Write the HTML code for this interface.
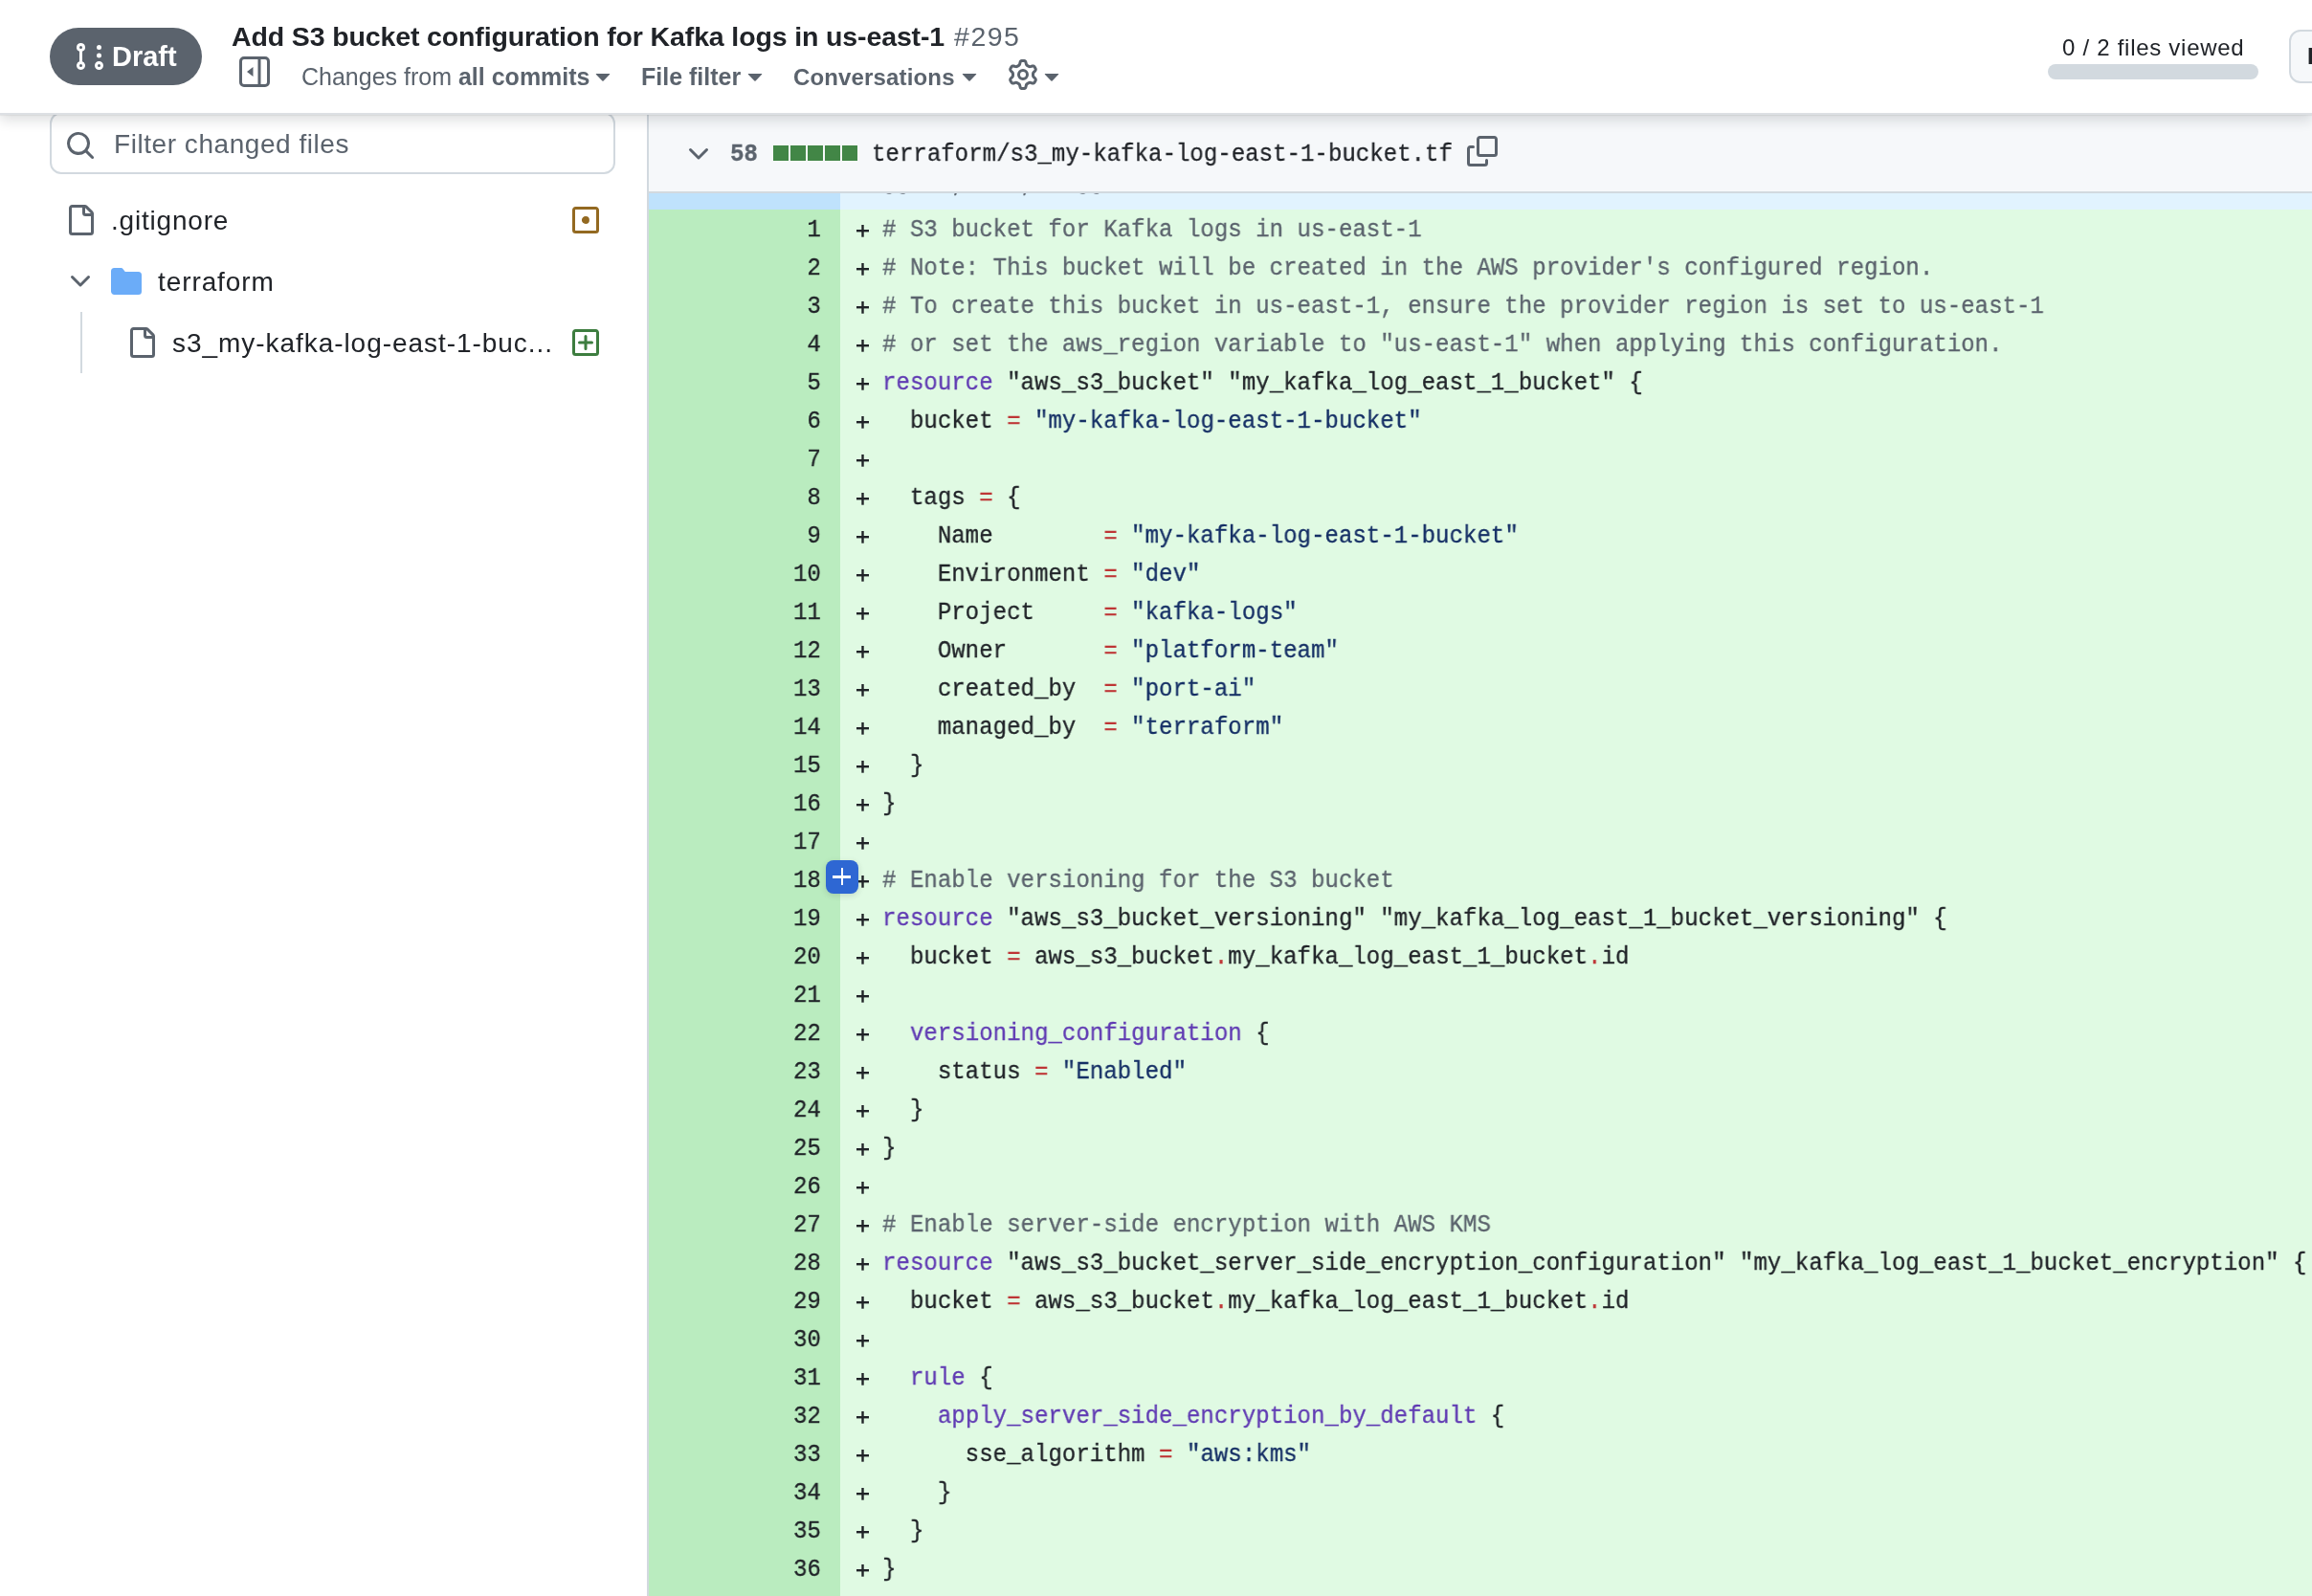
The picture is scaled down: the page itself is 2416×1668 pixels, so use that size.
<!DOCTYPE html>
<html><head><meta charset="utf-8"><title>Files changed</title><style>
*{box-sizing:border-box}
html,body{margin:0;padding:0}
body{width:2416px;height:1668px;overflow:hidden;position:relative;background:#fff;font-family:"Liberation Sans",sans-serif;color:#202328}
.ic{position:absolute;display:block}
.abs{position:absolute;white-space:pre}
.t{position:absolute;white-space:pre;line-height:40px;will-change:transform}
i{font-style:normal}
.c{color:#5b636d} .k{color:#603bb3} .s{color:#152f65} .o{color:#be3536}
.mono{font-family:"Liberation Mono",monospace}
</style></head>
<body>
<div class=abs style="left:52px;top:117px;width:591px;height:65px;border:2px solid #d2d9df;border-radius:12px;background:#fff"></div>
<svg class=ic style="left:68px;top:136px;width:32px;height:32px;fill:#5b636d;" viewBox="0 0 16 16"><path d="M10.68 11.74a6 6 0 0 1-7.922-8.982 6 6 0 0 1 8.982 7.922l3.04 3.04a.749.749 0 0 1-.326 1.275.749.749 0 0 1-.734-.215ZM11.5 7a4.499 4.499 0 1 0-8.997 0A4.499 4.499 0 0 0 11.5 7Z"/></svg>
<div class=t style="left:119px;top:131px;font-size:28px;font-weight:normal;letter-spacing:0.55px;color:#5b636d;">Filter changed files</div>
<svg class=ic style="left:68px;top:214px;width:32px;height:32px;fill:#5b636d;" viewBox="0 0 16 16"><path d="M2 1.75C2 .784 2.784 0 3.75 0h6.586c.464 0 .909.184 1.237.513l2.914 2.914c.329.328.513.773.513 1.237v9.586A1.75 1.75 0 0 1 13.25 16h-9.5A1.75 1.75 0 0 1 2 14.25Zm1.75-.25a.25.25 0 0 0-.25.25v12.5c0 .138.112.25.25.25h9.5a.25.25 0 0 0 .25-.25V6h-2.75A1.75 1.75 0 0 1 9 4.25V1.5Zm6.75.062V4.25c0 .138.112.25.25.25h2.688l-.011-.013-2.914-2.914-.013-.011Z"/></svg>
<div class=t style="left:116px;top:211px;font-size:28px;font-weight:normal;letter-spacing:0.8px;color:#202328;">.gitignore</div>
<svg class=ic style="left:596px;top:214px;width:32px;height:32px;fill:#936921;" viewBox="0 0 16 16"><path d="M13.25 1c.966 0 1.75.784 1.75 1.75v10.5A1.75 1.75 0 0 1 13.25 15H2.75A1.75 1.75 0 0 1 1 13.25V2.75C1 1.784 1.784 1 2.75 1ZM2.75 2.5a.25.25 0 0 0-.25.25v10.5c0 .138.112.25.25.25h10.5a.25.25 0 0 0 .25-.25V2.75a.25.25 0 0 0-.25-.25ZM8 10a2 2 0 1 1-.001-3.999A2 2 0 0 1 8 10Z"/></svg>
<svg class=ic style="left:68px;top:278px;width:32px;height:32px;fill:#5b636d;" viewBox="0 0 16 16"><path d="M12.78 5.22a.749.749 0 0 1 0 1.06l-4.25 4.25a.749.749 0 0 1-1.06 0L3.22 6.28a.749.749 0 1 1 1.06-1.06L8 8.939l3.72-3.719a.749.749 0 0 1 1.06 0Z"/></svg>
<svg class=ic style="left:116px;top:278px;width:32px;height:32px;fill:#6bacf8;" viewBox="0 0 16 16"><path d="M1.75 1A1.75 1.75 0 0 0 0 2.75v10.5C0 14.216.784 15 1.75 15h12.5A1.75 1.75 0 0 0 16 13.25v-8.5A1.75 1.75 0 0 0 14.25 3H7.5a.25.25 0 0 1-.2-.1l-.9-1.2C6.07 1.26 5.55 1 5 1H1.75Z"/></svg>
<div class=t style="left:164.5px;top:275px;font-size:28px;font-weight:normal;letter-spacing:0.91px;color:#202328;">terraform</div>
<div class=abs style="left:84px;top:326px;width:2px;height:64px;background:#d2d9df"></div>
<svg class=ic style="left:132px;top:342px;width:32px;height:32px;fill:#5b636d;" viewBox="0 0 16 16"><path d="M2 1.75C2 .784 2.784 0 3.75 0h6.586c.464 0 .909.184 1.237.513l2.914 2.914c.329.328.513.773.513 1.237v9.586A1.75 1.75 0 0 1 13.25 16h-9.5A1.75 1.75 0 0 1 2 14.25Zm1.75-.25a.25.25 0 0 0-.25.25v12.5c0 .138.112.25.25.25h9.5a.25.25 0 0 0 .25-.25V6h-2.75A1.75 1.75 0 0 1 9 4.25V1.5Zm6.75.062V4.25c0 .138.112.25.25.25h2.688l-.011-.013-2.914-2.914-.013-.011Z"/></svg>
<div class=t style="left:180px;top:339px;font-size:28px;font-weight:normal;letter-spacing:0.95px;color:#202328;">s3_my-kafka-log-east-1-buc...</div>
<svg class=ic style="left:596px;top:342px;width:32px;height:32px;fill:#3d7d3f;" viewBox="0 0 16 16"><path d="M2.75 1h10.5c.966 0 1.75.784 1.75 1.75v10.5A1.75 1.75 0 0 1 13.25 15H2.75A1.75 1.75 0 0 1 1 13.25V2.75C1 1.784 1.784 1 2.75 1Zm10.5 1.5H2.75a.25.25 0 0 0-.25.25v10.5c0 .138.112.25.25.25h10.5a.25.25 0 0 0 .25-.25V2.75a.25.25 0 0 0-.25-.25ZM8 4a.75.75 0 0 1 .75.75v2.5h2.5a.75.75 0 0 1 0 1.5h-2.5v2.5a.75.75 0 0 1-1.5 0v-2.5h-2.5a.75.75 0 0 1 0-1.5h2.5v-2.5A.75.75 0 0 1 8 4Z"/></svg>
<div class=abs style="left:676px;top:118px;width:2px;height:1550px;background:#d2d9df"></div>
<div class=abs style="left:678px;top:202px;width:200px;height:17px;background:#bfe2fc"></div>
<div class=abs style="left:878px;top:202px;width:1538px;height:17px;background:#e1f3fe"></div>
<pre class="abs mono" style="margin:0;left:922px;top:172px;font-size:26px;line-height:40px;color:#5b636d;transform:scaleX(0.9262);transform-origin:0 0;will-change:transform;-webkit-text-stroke:0.3px currentColor">@@ -0,0 +1,58 @@</pre>
<div class=abs style="left:678px;top:219px;width:200px;height:1449px;background:#baecbf"></div>
<div class=abs style="left:878px;top:219px;width:1538px;height:1449px;background:#e0fae3"></div>
<pre class="abs mono" style="margin:0;left:642.06px;top:220px;width:215.94px;text-align:right;font-size:26px;line-height:40px;color:#202328;transform:scaleX(0.9262);transform-origin:100% 0;will-change:transform;-webkit-text-stroke:0.3px currentColor">1
2
3
4
5
6
7
8
9
10
11
12
13
14
15
16
17
18
19
20
21
22
23
24
25
26
27
28
29
30
31
32
33
34
35
36
37</pre>
<pre class="abs mono" style="margin:0;left:922px;top:220px;font-size:26px;line-height:40px;color:#202328;transform:scaleX(0.9262);transform-origin:0 0;will-change:transform;-webkit-text-stroke:0.3px currentColor"><i class=c># S3 bucket for Kafka logs in us-east-1</i>
<i class=c># Note: This bucket will be created in the AWS provider's configured region.</i>
<i class=c># To create this bucket in us-east-1, ensure the provider region is set to us-east-1</i>
<i class=c># or set the aws_region variable to "us-east-1" when applying this configuration.</i>
<i class=k>resource</i> "aws_s3_bucket" "my_kafka_log_east_1_bucket" {
  bucket <i class=o>=</i> <i class=s>"my-kafka-log-east-1-bucket"</i>

  tags <i class=o>=</i> {
    Name        <i class=o>=</i> <i class=s>"my-kafka-log-east-1-bucket"</i>
    Environment <i class=o>=</i> <i class=s>"dev"</i>
    Project     <i class=o>=</i> <i class=s>"kafka-logs"</i>
    Owner       <i class=o>=</i> <i class=s>"platform-team"</i>
    created_by  <i class=o>=</i> <i class=s>"port-ai"</i>
    managed_by  <i class=o>=</i> <i class=s>"terraform"</i>
  }
}

<i class=c># Enable versioning for the S3 bucket</i>
<i class=k>resource</i> "aws_s3_bucket_versioning" "my_kafka_log_east_1_bucket_versioning" {
  bucket <i class=o>=</i> aws_s3_bucket<i class=o>.</i>my_kafka_log_east_1_bucket<i class=o>.</i>id

  <i class=k>versioning_configuration</i> {
    status <i class=o>=</i> <i class=s>"Enabled"</i>
  }
}

<i class=c># Enable server-side encryption with AWS KMS</i>
<i class=k>resource</i> "aws_s3_bucket_server_side_encryption_configuration" "my_kafka_log_east_1_bucket_encryption" {
  bucket <i class=o>=</i> aws_s3_bucket<i class=o>.</i>my_kafka_log_east_1_bucket<i class=o>.</i>id

  <i class=k>rule</i> {
    <i class=k>apply_server_side_encryption_by_default</i> {
      sse_algorithm <i class=o>=</i> <i class=s>"aws:kms"</i>
    }
  }
}
</pre>
<svg class=ic style="left:894px;top:219px;width:16px;height:1449px" viewBox="0 0 16 1449"><defs><pattern id="pl" width="16" height="40" patternUnits="userSpaceOnUse"><rect x="1" y="21" width="13" height="2.4" fill="#202328"/><rect x="6.3" y="16" width="2.4" height="12.7" fill="#202328"/></pattern></defs><rect width="16" height="1449" fill="url(#pl)"/></svg>
<div class=abs style="left:863px;top:899px;width:34px;height:35px;border-radius:8px;background:#2e67d3;box-shadow:0 2px 6px rgba(31,35,40,0.15)"></div>
<div class=abs style="left:870px;top:915px;width:19px;height:2.5px;background:#fff"></div>
<div class=abs style="left:878.5px;top:907px;width:2.5px;height:18px;background:#fff"></div>
<div class=abs style="left:678px;top:120px;width:1738px;height:82px;background:#f6f8fa;border-bottom:2px solid #d2d9df"></div>
<svg class=ic style="left:714px;top:145px;width:32px;height:32px;fill:#5b636d;" viewBox="0 0 16 16"><path d="M12.78 5.22a.749.749 0 0 1 0 1.06l-4.25 4.25a.749.749 0 0 1-1.06 0L3.22 6.28a.749.749 0 1 1 1.06-1.06L8 8.939l3.72-3.719a.749.749 0 0 1 1.06 0Z"/></svg>
<pre class="abs mono" style="margin:0;left:763px;top:141px;font-size:26px;line-height:40px;font-weight:bold;color:#5b636d;transform:scaleX(0.9262);transform-origin:0 0;will-change:transform;-webkit-text-stroke:0.3px currentColor">58</pre>
<div class=abs style="left:808px;top:152px;width:16px;height:16px;background:#428646"></div>
<div class=abs style="left:826px;top:152px;width:16px;height:16px;background:#428646"></div>
<div class=abs style="left:844px;top:152px;width:16px;height:16px;background:#428646"></div>
<div class=abs style="left:862px;top:152px;width:16px;height:16px;background:#428646"></div>
<div class=abs style="left:880px;top:152px;width:16px;height:16px;background:#428646"></div>
<pre class="abs mono" style="margin:0;left:910.5px;top:141px;font-size:26px;line-height:40px;color:#202328;transform:scaleX(0.9262);transform-origin:0 0;will-change:transform;-webkit-text-stroke:0.3px currentColor">terraform/s3_my-kafka-log-east-1-bucket.tf</pre>
<svg class=ic style="left:1533px;top:142px;width:32px;height:32px;fill:#5b636d;" viewBox="0 0 16 16"><path d="M0 6.75C0 5.784.784 5 1.75 5h1.5a.75.75 0 0 1 0 1.5h-1.5a.25.25 0 0 0-.25.25v7.5c0 .138.112.25.25.25h7.5a.25.25 0 0 0 .25-.25v-1.5a.75.75 0 0 1 1.5 0v1.5A1.75 1.75 0 0 1 9.25 16h-7.5A1.75 1.75 0 0 1 0 14.25Z"/><path d="M5 1.75C5 .784 5.784 0 6.75 0h7.5C15.216 0 16 .784 16 1.75v7.5A1.75 1.75 0 0 1 14.25 11h-7.5A1.75 1.75 0 0 1 5 9.25Zm1.75-.25a.25.25 0 0 0-.25.25v7.5c0 .138.112.25.25.25h7.5a.25.25 0 0 0 .25-.25v-7.5a.25.25 0 0 0-.25-.25Z"/></svg>
<div class=abs style="left:0;top:0;width:2416px;height:120px;background:#fff;border-bottom:2px solid #dde0e4;box-shadow:0 1px 1px rgba(31,35,40,0.06),0 6px 12px rgba(31,35,40,0.14)"></div>
<div class=abs style="left:52px;top:29px;width:159px;height:60px;border-radius:30px;background:#5b636d"></div>
<svg class=ic style="left:78px;top:43px;width:32px;height:32px;fill:#fff;" viewBox="0 0 16 16"><path d="M3.25 1A2.25 2.25 0 0 1 4 5.372v5.256a2.251 2.251 0 1 1-1.5 0V5.372A2.25 2.25 0 0 1 3.25 1Zm9.5 14a2.25 2.25 0 1 1 0-4.5 2.25 2.25 0 0 1 0 4.5ZM2.5 3.25a.75.75 0 1 0 1.5 0 .75.75 0 0 0-1.5 0ZM3.25 12a.75.75 0 1 0 0 1.5.75.75 0 0 0 0-1.5Zm9.5 0a.75.75 0 1 0 0 1.5.75.75 0 0 0 0-1.5ZM14 7.5a1.25 1.25 0 1 1-2.5 0 1.25 1.25 0 0 1 2.5 0Zm0-4.25a1.25 1.25 0 1 1-2.5 0 1.25 1.25 0 0 1 2.5 0Z"/></svg>
<div class=t style="left:117px;top:39px;font-size:29px;font-weight:bold;letter-spacing:0px;color:#fff;">Draft</div>
<div class=t style="left:242px;top:18px;font-size:28.5px;font-weight:bold;letter-spacing:-0.13px;color:#202328;">Add S3 bucket configuration for Kafka logs in us-east-1<span style="font-weight:normal;color:#5b636d;margin-left:10px;letter-spacing:1.5px">#295</span></div>
<svg class=ic style="left:250px;top:59px;width:32px;height:32px" viewBox="0 0 32 32"><rect x="1.5" y="1.5" width="29" height="29" rx="3.5" fill="none" stroke="#5b636d" stroke-width="3"/><rect x="19.5" y="2" width="3" height="28" fill="#5b636d"/><path d="M14.5 11 L8 16 L14.5 21 Z" fill="#5b636d"/></svg>
<div class=t style="left:314.5px;top:60px;font-size:25px;font-weight:normal;letter-spacing:0px;color:#5b636d;">Changes from <b>all commits</b></div>
<svg class=ic style="left:614px;top:63px;width:32px;height:32px;fill:#5b636d;" viewBox="0 0 16 16"><path d="m4.427 7.427 3.396 3.396a.25.25 0 0 0 .354 0l3.396-3.396A.25.25 0 0 0 11.396 7H4.604a.25.25 0 0 0-.177.427Z"/></svg>
<div class=t style="left:670px;top:60px;font-size:25px;font-weight:bold;letter-spacing:0px;color:#5b636d;">File filter</div>
<svg class=ic style="left:773px;top:63px;width:32px;height:32px;fill:#5b636d;" viewBox="0 0 16 16"><path d="m4.427 7.427 3.396 3.396a.25.25 0 0 0 .354 0l3.396-3.396A.25.25 0 0 0 11.396 7H4.604a.25.25 0 0 0-.177.427Z"/></svg>
<div class=t style="left:829px;top:61px;font-size:24px;font-weight:bold;letter-spacing:0.15px;color:#5b636d;">Conversations</div>
<svg class=ic style="left:997px;top:63px;width:32px;height:32px;fill:#5b636d;" viewBox="0 0 16 16"><path d="m4.427 7.427 3.396 3.396a.25.25 0 0 0 .354 0l3.396-3.396A.25.25 0 0 0 11.396 7H4.604a.25.25 0 0 0-.177.427Z"/></svg>
<svg class=ic style="left:1053px;top:62px;width:32px;height:32px;fill:#5b636d;" viewBox="0 0 16 16"><path d="M8 0a8.2 8.2 0 0 1 .701.031C9.444.095 9.99.645 10.16 1.29l.288 1.107c.018.066.079.158.212.224.231.114.454.243.668.386.123.082.233.09.299.071l1.103-.303c.644-.176 1.392.021 1.82.63.27.385.506.792.704 1.218.315.675.111 1.422-.364 1.891l-.814.806c-.049.048-.098.147-.088.294.016.257.016.515 0 .772-.01.147.038.246.088.294l.814.806c.475.469.679 1.216.364 1.891a7.977 7.977 0 0 1-.704 1.217c-.428.61-1.176.807-1.82.63l-1.102-.302c-.067-.019-.177-.011-.3.071a5.909 5.909 0 0 1-.668.386c-.133.066-.194.158-.211.224l-.29 1.106c-.168.646-.715 1.196-1.458 1.26a8.006 8.006 0 0 1-1.402 0c-.743-.064-1.289-.614-1.458-1.26l-.289-1.106c-.018-.066-.079-.158-.212-.224a5.738 5.738 0 0 1-.668-.386c-.123-.082-.233-.09-.299-.071l-1.103.303c-.644.176-1.392-.021-1.82-.63a8.12 8.12 0 0 1-.704-1.218c-.315-.675-.111-1.422.363-1.891l.815-.806c.05-.048.098-.147.088-.294a6.214 6.214 0 0 1 0-.772c.01-.147-.038-.246-.088-.294l-.815-.806C.635 6.045.431 5.298.746 4.623a7.92 7.92 0 0 1 .704-1.217c.428-.61 1.176-.807 1.82-.63l1.102.302c.067.019.177.011.3-.071.214-.143.437-.272.668-.386.133-.066.194-.158.211-.224l.29-1.106C6.009.645 6.556.095 7.299.03 7.53.01 7.764 0 8 0Zm-.571 1.525c-.036.003-.108.036-.137.146l-.289 1.105c-.147.561-.549.967-.998 1.189-.173.086-.34.183-.5.29-.417.278-.97.423-1.529.27l-1.103-.303c-.109-.03-.175.016-.195.045-.22.312-.412.644-.573.99-.014.031-.021.11.059.19l.815.806c.411.406.562.957.53 1.456a4.709 4.709 0 0 0 0 .582c.032.499-.119 1.05-.53 1.456l-.815.806c-.081.08-.073.159-.059.19.162.346.353.677.573.989.02.03.085.076.195.046l1.102-.303c.56-.153 1.113-.008 1.53.27.161.107.328.204.501.29.447.222.85.629.997 1.189l.289 1.105c.029.109.101.143.137.146a6.6 6.6 0 0 0 1.142 0c.036-.003.108-.036.137-.146l.289-1.105c.147-.561.549-.967.998-1.189.173-.086.34-.183.5-.29.417-.278.97-.423 1.529-.27l1.103.303c.109.029.175-.016.195-.045.22-.313.411-.644.573-.99.014-.031.021-.11-.059-.19l-.815-.806c-.411-.406-.562-.957-.53-1.456a4.709 4.709 0 0 0 0-.582c-.032-.499.119-1.05.53-1.456l.815-.806c.081-.08.073-.159.059-.19a6.464 6.464 0 0 0-.573-.989c-.02-.03-.085-.076-.195-.046l-1.102.303c-.56.153-1.113.008-1.53-.27a4.44 4.44 0 0 0-.501-.29c-.447-.222-.85-.629-.997-1.189l-.289-1.105c-.029-.11-.101-.143-.137-.146a6.6 6.6 0 0 0-1.142 0ZM11 8a3 3 0 1 1-6 0 3 3 0 0 1 6 0ZM9.5 8a1.5 1.5 0 1 0-3.001.001A1.5 1.5 0 0 0 9.5 8Z"/></svg>
<svg class=ic style="left:1083px;top:63px;width:32px;height:32px;fill:#5b636d;" viewBox="0 0 16 16"><path d="m4.427 7.427 3.396 3.396a.25.25 0 0 0 .354 0l3.396-3.396A.25.25 0 0 0 11.396 7H4.604a.25.25 0 0 0-.177.427Z"/></svg>
<div class=t style="left:2155px;top:30px;font-size:24px;font-weight:normal;letter-spacing:0.72px;color:#202328;">0 / 2 files viewed</div>
<div class=abs style="left:2140px;top:67px;width:220px;height:16px;border-radius:8px;background:#d2d9df"></div>
<div class=abs style="left:2392px;top:31px;width:120px;height:56px;border-radius:12px;background:#f6f8fa;border:2px solid #d2d9df"></div>
<div class=t style="left:2411px;top:39px;font-size:24px;font-weight:bold;letter-spacing:0px;color:#202328;">Review changes</div>
</body></html>
